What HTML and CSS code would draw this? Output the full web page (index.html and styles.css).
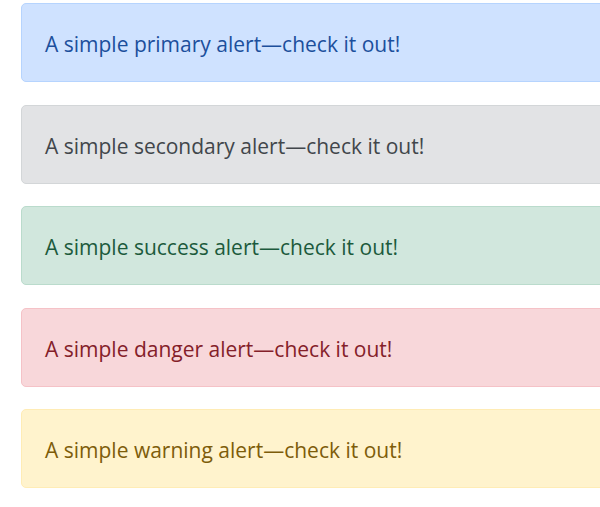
FILE: index.html
```html
<!DOCTYPE html>
<html lang="en">
<head>
<meta charset="utf-8">
<title>Alerts</title>
<link rel="stylesheet" href="styles.css">
</head>
<body>
<div class="page">
  <div class="alert alert-primary">A simple primary alert—check it out!</div>
  <div class="alert alert-secondary">A simple secondary alert—check it out!</div>
  <div class="alert alert-success">A simple success alert—check it out!</div>
  <div class="alert alert-danger">A simple danger alert—check it out!</div>
  <div class="alert alert-warning">A simple warning alert—check it out!</div>
</div>
</body>
</html>
```
FILE: styles.css
```css
html, body {
  margin: 0;
  padding: 0;
  background: #fff;
  overflow: hidden;
}
.page {
  padding: 3px 0 0 21px;
  display: flex;
  flex-direction: column;
  gap: 22.5px;
  font-family: "Open Sans", "Noto Sans", sans-serif;
}
.alert {
  margin-right: -20px;
  height: 79px;
  box-sizing: border-box;
  border: 1px solid transparent;
  border-radius: 5px;
  padding: 3px 24px 0 23px;
  display: flex;
  align-items: center;
  font-size: 21px;
  line-height: 30px;
}
.alert-primary { background: #cfe2ff; color: #1c4f9c; border-color: #b6d4fe; }
.alert-secondary { background: #e2e3e5; color: #41464b; border-color: #d3d6d8; }
.alert-success { background: #d1e7dd; color: #1c5a3c; border-color: #badbcc; }
.alert-danger { background: #f8d7da; color: #842029; border-color: #f5c2c7; }
.alert-warning { background: #fff3cd; color: #7d5c0a; border-color: #ffecb5; }
```
